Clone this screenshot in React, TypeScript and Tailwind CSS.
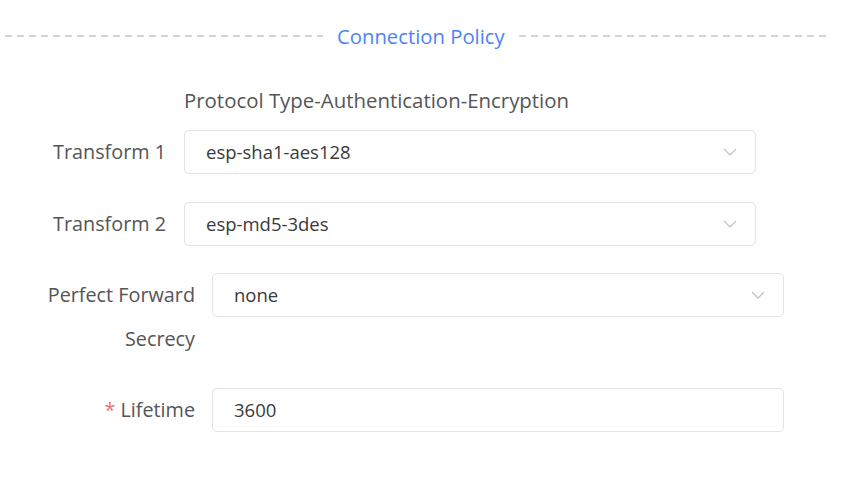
import React from 'react';

function Chevron() {
  return (
    <svg width="14" height="8" viewBox="0 0 14 8" className="shrink-0">
      <polyline points="1,1 7,7 13,1" fill="none" stroke="#c4c4c8" strokeWidth="1.3" />
    </svg>
  );
}

function Field({ value, select }: { value: string; select?: boolean }) {
  return (
    <div className="flex h-[44px] w-[572px] items-center justify-between rounded-[5px] border border-[#e2e2e7] pl-[21px] pr-[18px] text-[18.5px] text-[#3a3a3a]">
      <span>{value}</span>
      {select && <Chevron />}
    </div>
  );
}

function App() {
  return (
    <div
      className="h-[481px] w-[863px] overflow-hidden bg-white pt-[14px]"
      style={{ fontFamily: '"Open Sans", "Liberation Sans", sans-serif' }}
    >
      {/* section divider */}
      <div className="flex h-[44px] items-center pl-[5px] pr-[33px]">
        <div className="h-[2px] w-[318px] bg-[repeating-linear-gradient(90deg,#d4d4d4_0_7px,transparent_7px_12px)]" />
        <span className="px-[14px] text-[20.3px] text-[#4c84f5]">Connection Policy</span>
        <div className="h-[2px] flex-1 bg-[repeating-linear-gradient(90deg,#d4d4d4_0_7px,transparent_7px_12px)]" />
      </div>

      <div className="mt-[20px] pl-[184px] text-[20.4px] leading-[44px] text-[#555]">
        Protocol Type-Authentication-Encryption
      </div>

      <div className="mt-[8px] text-[19.8px] text-[#555]">
        <div className="mb-[28px] flex">
          <div className="w-[166px] text-right leading-[44px]">Transform 1</div>
          <div className="ml-[18px]">
            <Field value="esp-sha1-aes128" select />
          </div>
        </div>
        <div className="mb-[27px] flex">
          <div className="w-[166px] text-right leading-[44px]">Transform 2</div>
          <div className="ml-[18px]">
            <Field value="esp-md5-3des" select />
          </div>
        </div>
        <div className="mb-[27px] flex">
          <div className="ml-[44px] w-[151px] text-right leading-[44px]">Perfect Forward Secrecy</div>
          <div className="ml-[17px]">
            <Field value="none" select />
          </div>
        </div>
        <div className="flex">
          <div className="ml-[44px] w-[151px] text-right leading-[44px]">
            <span className="mr-[5px] text-[#f56c6c]">*</span>Lifetime
          </div>
          <div className="ml-[17px]">
            <Field value="3600" />
          </div>
        </div>
      </div>
    </div>
  );
}

export default App;
